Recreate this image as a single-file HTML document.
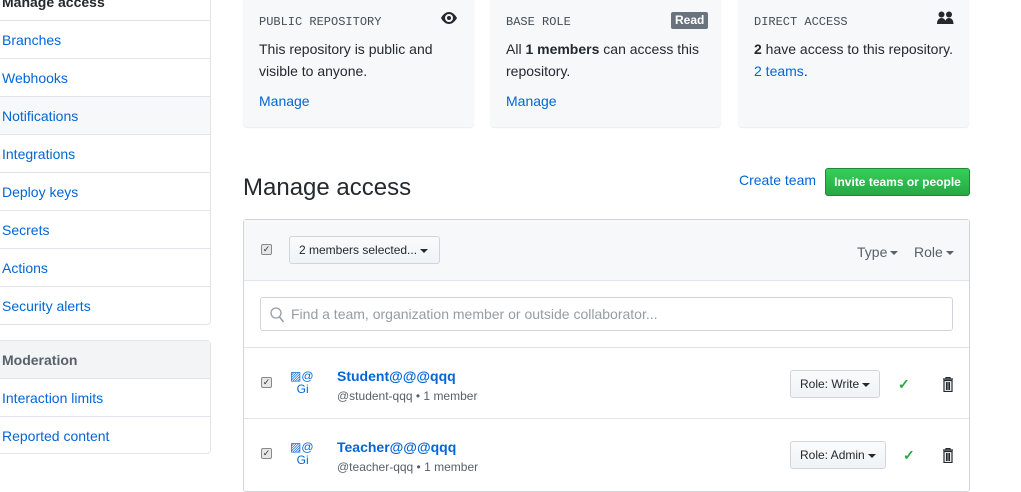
<!DOCTYPE html>
<html><head><style>
*{box-sizing:border-box;margin:0;padding:0}
body{width:1021px;height:492px;overflow:hidden;background:#fff;font-family:"Liberation Sans",sans-serif;font-size:14px;color:#24292e;position:relative}
a{color:#0366d6;text-decoration:none}
.abs{position:absolute}
.side{position:absolute;left:-10px;width:221px;border:1px solid #e1e4e8;border-radius:0 4px 4px 0;background:#fff}
.side div{height:38px;line-height:39px;padding-left:11px;border-bottom:1px solid #e1e4e8;color:#0366d6}
.side div:last-child{border-bottom:none}
.card{position:absolute;top:-5px;height:132px;width:231px;background:#f6f8fa;border-radius:0 0 4px 4px;box-shadow:0 1px 1px rgba(0,0,0,.08);padding:20px 16px}
.mono{font-family:"Liberation Mono",monospace;font-size:12px;color:#444d56;position:absolute;top:20px;left:16px}
.card p{position:absolute;top:43px;left:16px;right:14px;line-height:22px}
.card .m{position:absolute;top:98px;left:16px}
.cb{position:absolute;width:11px;height:11px;border:1px solid #888;border-radius:2px;background:#e6e6e6;font-size:9px;line-height:9px;text-align:center;color:#333}
.btn{position:absolute;border:1px solid #d1d5da;border-radius:3px;background:linear-gradient(#fafbfc,#eff3f6);font-size:12px;line-height:26px;padding:0 9px;color:#24292e}
.car{display:inline-block;border:4px solid transparent;border-top-color:#24292e;border-bottom:0;vertical-align:middle;margin-left:3px}
</style></head><body>
<div class="side" style="top:-18px;height:343px">
<div style="color:#24292e;font-weight:bold;height:38px">Manage access</div>
<div>Branches</div><div>Webhooks</div><div style="background:#f6f8fa">Notifications</div><div>Integrations</div><div>Deploy keys</div><div>Secrets</div><div>Actions</div><div>Security alerts</div>
</div>
<div class="side" style="top:340px;height:114px;border-radius:0 4px 4px 0">
<div style="background:#f3f4f6;color:#586069;font-weight:bold">Moderation</div><div>Interaction limits</div><div>Reported content</div>
</div>

<div class="card" style="left:243px"><span class="mono" style="top:20px">PUBLIC REPOSITORY</span>
<svg class="abs" style="left:198px;top:17px" width="16" height="12" viewBox="0 0 16 12"><path d="M8 0C3 0 0 6 0 6s3 6 8 6 8-6 8-6-3-6-8-6zm0 10a4 4 0 110-8 4 4 0 010 8zm0-6a2 2 0 100 4 2 2 0 000-4z" fill="#24292e"/></svg>
<p>This repository is public and visible to anyone.</p><a class="m" href="#">Manage</a></div>
<div class="card" style="left:490px"><span class="mono">BASE ROLE</span>
<span class="abs" style="left:181px;top:17px;background:#6a737d;color:#fff;font-size:12px;font-weight:bold;padding:1px 4px;border-radius:2px;line-height:15px">Read</span>
<p>All <b>1 members</b> can access this repository.</p><a class="m" href="#">Manage</a></div>
<div class="card" style="left:738px"><span class="mono">DIRECT ACCESS</span>
<svg class="abs" style="left:199px;top:16px" width="17" height="14" viewBox="0 0 17 14"><circle cx="4.5" cy="3.5" r="3" fill="#24292e"/><circle cx="12" cy="3.5" r="3" fill="#24292e"/><path d="M0 13c0-4 2-6 4.5-6S9 9 9 13zM8 13c0-4 1.5-6 4-6s4.5 2 4.5 6z" fill="#24292e"/></svg>
<p><b>2</b> have access to this repository. <a href="#">2 teams</a>.</p></div>

<div class="abs" style="left:243px;top:174px;font-size:24px">Manage access</div>
<a class="abs" href="#" style="left:739px;top:172px">Create team</a>
<div class="abs" style="left:825px;top:168px;width:145px;height:28px;background:linear-gradient(#34d058,#28a745);border:1px solid #22863a;border-radius:3px;color:#fff;font-size:12px;font-weight:bold;text-align:center;line-height:26px">Invite teams or people</div>

<div class="abs" style="left:243px;top:219px;width:727px;height:273px;border:1px solid #d1d5da;border-radius:3px">
<div style="height:61px;background:#f6f8fa;border-bottom:1px solid #e1e4e8;position:relative">
<div class="cb" style="left:17px;top:24px">✓</div>
<div class="btn" style="left:45px;top:16px;height:28px;width:151px">2 members selected...<span class="car"></span></div>
<span class="abs" style="left:613px;top:24px;color:#586069">Type<span class="car" style="border-top-color:#586069"></span></span>
<span class="abs" style="left:670px;top:24px;color:#586069">Role<span class="car" style="border-top-color:#586069"></span></span>
</div>
<div class="abs" style="left:16px;top:77px;width:693px;height:34px;border:1px solid #d1d5da;border-radius:3px">
<svg class="abs" style="left:9px;top:9px" width="15" height="16" viewBox="0 0 15 16"><circle cx="6" cy="6" r="5" fill="none" stroke="#959da5" stroke-width="1.3"/><path d="M9.5 10l4 5" stroke="#959da5" stroke-width="1.5"/></svg>
<span class="abs" style="left:30px;top:8px;color:#959da5">Find a team, organization member or outside collaborator...</span></div>
<div class="abs" style="left:0;top:127px;width:725px;border-top:1px solid #e1e4e8"></div>
<div class="abs" style="left:0;top:198px;width:725px;border-top:1px solid #e1e4e8"></div>

<div class="cb" style="left:17px;top:157px">✓</div>
<span class="abs" style="left:46px;top:150px;font-size:12px;color:#0366d6;line-height:13px">▨@<br>&nbsp;&nbsp;Gi</span>
<a class="abs" href="#" style="left:93px;top:148px;font-weight:bold">Student@@@qqq</a>
<span class="abs" style="left:93px;top:169px;font-size:12px;color:#586069">@student-qqq • 1 member</span>
<div class="btn" style="left:546px;top:150px;height:28px">Role: Write<span class="car"></span></div>
<span class="abs" style="left:654px;top:156px;color:#28a745;font-weight:bold">✓</span>
<svg class="abs" style="left:698px;top:157px" width="12" height="15" viewBox="0 0 12 15"><path d="M1 2h10M4 2V0.5h4V2M2 3.5h8v11H2zM4.5 5v8M6 5v8M7.5 5v8" stroke="#24292e" stroke-width="1.2" fill="none"/></svg>

<div class="cb" style="left:17px;top:228px">✓</div>
<span class="abs" style="left:46px;top:221px;font-size:12px;color:#0366d6;line-height:13px">▨@<br>&nbsp;&nbsp;Gi</span>
<a class="abs" href="#" style="left:93px;top:219px;font-weight:bold">Teacher@@@qqq</a>
<span class="abs" style="left:93px;top:240px;font-size:12px;color:#586069">@teacher-qqq • 1 member</span>
<div class="btn" style="left:546px;top:221px;height:28px">Role: Admin<span class="car"></span></div>
<span class="abs" style="left:659px;top:227px;color:#28a745;font-weight:bold">✓</span>
<svg class="abs" style="left:698px;top:228px" width="12" height="15" viewBox="0 0 12 15"><path d="M1 2h10M4 2V0.5h4V2M2 3.5h8v11H2zM4.5 5v8M6 5v8M7.5 5v8" stroke="#24292e" stroke-width="1.2" fill="none"/></svg>
</div>
</body></html>
